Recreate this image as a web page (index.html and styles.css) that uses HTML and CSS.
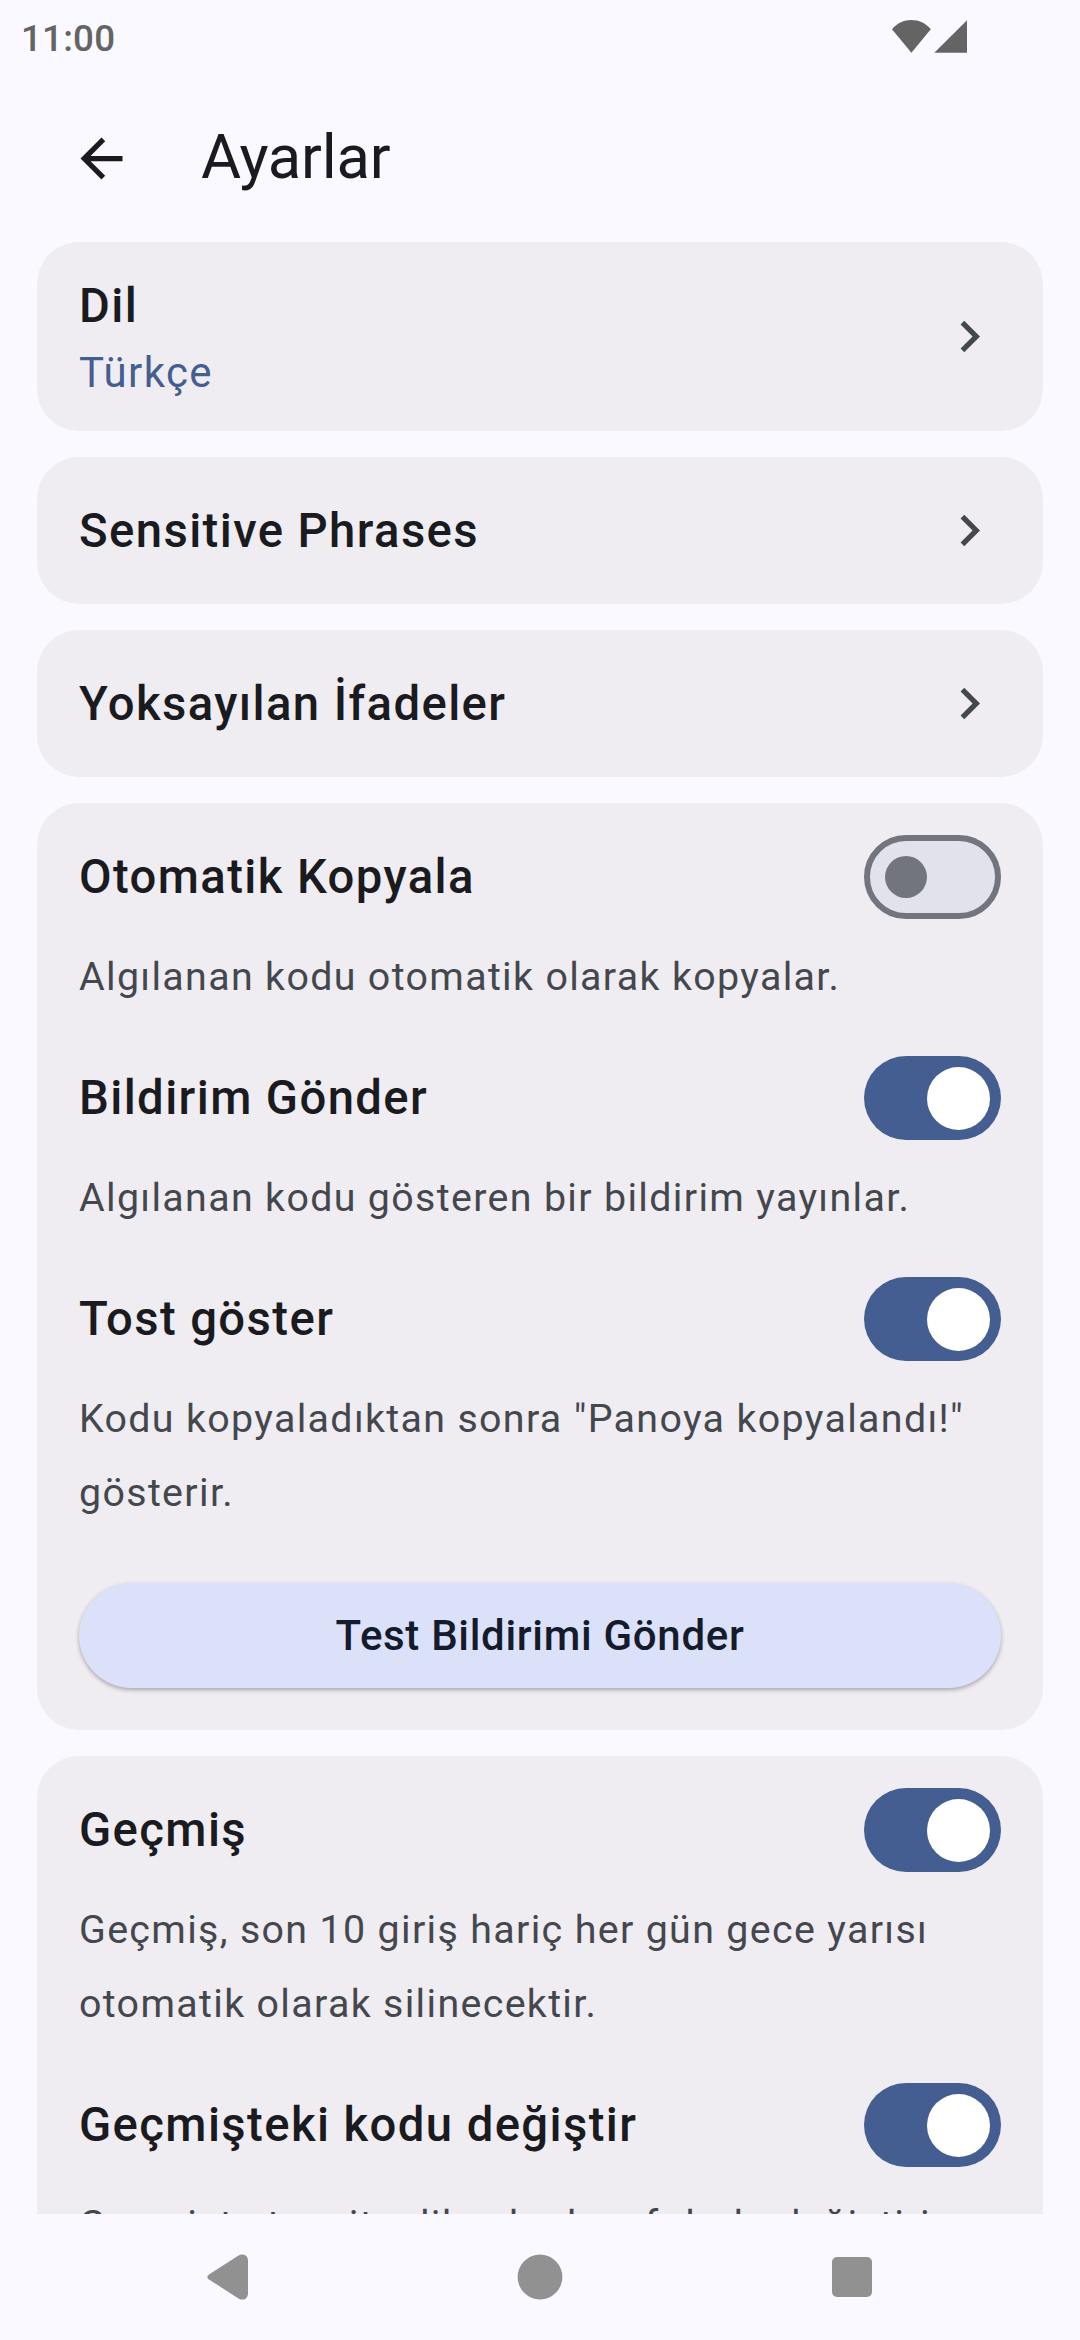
FILE: index.html
```html
<!DOCTYPE html>
<html lang="tr">
<head>
<meta charset="utf-8">
<title>Ayarlar</title>
<link rel="stylesheet" href="styles.css">
</head>
<body>
<div class="screen">
  <div class="status-bar">
    <span class="clock">11:00</span>
    <svg class="status-icons" width="75" height="33" viewBox="0 0 75 33" fill="currentColor">
      <path d="M0 9.2C5.2 3 12 0 19.4 0s14.2 3 19.4 9.2L19.4 32.7z"/>
      <path d="M42.3 32.7H75V0.3z"/>
    </svg>
  </div>

  <header class="app-bar">
    <svg class="back" viewBox="0 0 24 24" fill="currentColor"><path d="M20 11H7.83l5.59-5.59L12 4l-8 8 8 8 1.41-1.41L7.83 13H20z"/></svg>
    <h1 class="app-title">Ayarlar</h1>
  </header>

  <main class="content">
    <section class="card nav-card tall">
      <div class="labels">
        <h2 class="title">Dil</h2>
        <p class="value">Türkçe</p>
      </div>
      <svg class="chevron" viewBox="0 0 24 24" fill="currentColor"><path d="M10 6L8.59 7.41 13.17 12l-4.58 4.59L10 18l6-6z"/></svg>
    </section>

    <section class="card nav-card">
      <h2 class="title">Sensitive Phrases</h2>
      <svg class="chevron" viewBox="0 0 24 24" fill="currentColor"><path d="M10 6L8.59 7.41 13.17 12l-4.58 4.59L10 18l6-6z"/></svg>
    </section>

    <section class="card nav-card">
      <h2 class="title">Yoksayılan İfadeler</h2>
      <svg class="chevron" viewBox="0 0 24 24" fill="currentColor"><path d="M10 6L8.59 7.41 13.17 12l-4.58 4.59L10 18l6-6z"/></svg>
    </section>

    <section class="card">
      <div class="setting">
        <h2 class="title">Otomatik Kopyala</h2>
        <span class="switch"><span class="knob"></span></span>
      </div>
      <p class="description">Algılanan kodu otomatik olarak kopyalar.</p>

      <div class="setting">
        <h2 class="title">Bildirim Gönder</h2>
        <span class="switch on"><span class="knob"></span></span>
      </div>
      <p class="description">Algılanan kodu gösteren bir bildirim yayınlar.</p>

      <div class="setting">
        <h2 class="title">Tost göster</h2>
        <span class="switch on"><span class="knob"></span></span>
      </div>
      <p class="description">Kodu kopyaladıktan sonra "Panoya kopyalandı!" gösterir.</p>

      <button class="test-button">Test Bildirimi Gönder</button>
    </section>

    <section class="card">
      <div class="setting">
        <h2 class="title">Geçmiş</h2>
        <span class="switch on"><span class="knob"></span></span>
      </div>
      <p class="description">Geçmiş, son 10 giriş hariç her gün gece yarısı otomatik olarak silinecektir.</p>

      <div class="setting">
        <h2 class="title">Geçmişteki kodu değiştir</h2>
        <span class="switch on"><span class="knob"></span></span>
      </div>
      <p class="description">Geçmişte tespit edilen kodu sıfırlarla değiştirir.</p>
    </section>
  </main>

  <nav class="nav-bar">
    <svg width="42" height="46" viewBox="0 0 42 46" fill="currentColor"><path d="M2.4 20.2L31.5 1.6C36 -1.2 41 1.2 41 6.5V39.5C41 44.8 36 47.2 31.5 44.4L2.4 25.8C-0.3 24.1 -0.3 21.9 2.4 20.2z"/></svg>
    <svg width="46" height="46" viewBox="0 0 46 46" fill="currentColor"><circle cx="23" cy="23" r="22.4"/></svg>
    <svg width="42" height="42" viewBox="0 0 42 42" fill="currentColor"><rect x="1" y="1" width="40" height="40" rx="5"/></svg>
  </nav>
</div>
</body>
</html>
```
FILE: styles.css
```css
* {
  box-sizing: border-box;
  margin: 0;
  padding: 0;
}

body {
  background: #faf9ff;
  color: #1a1b20;
  font-family: Roboto, sans-serif;
}

.screen {
  display: flex;
  flex-direction: column;
  width: 1080px;
  height: 2340px;
  overflow: hidden;
}

.status-bar {
  display: flex;
  justify-content: space-between;
  align-items: flex-start;
  height: 74px;
  padding: 20px 113px 0 21px;
  color: #646464;
}

.clock {
  font-size: 36.75px;
  font-weight: 500;
  line-height: 38px;
  letter-spacing: 0.2px;
}

.app-bar {
  display: flex;
  align-items: center;
  gap: 68px;
  height: 168px;
  padding-left: 70px;
}

.back {
  width: 63px;
  height: 63px;
}

.app-title {
  padding-bottom: 2px;
  font-size: 61.5px;
  font-weight: 400;
  line-height: 74px;
  letter-spacing: -0.2px;
}

.content {
  display: flex;
  flex-direction: column;
  gap: 26px;
  height: 1972px;
  padding: 0 37px;
  overflow: hidden;
}

.card {
  flex: none;
  padding: 0 42px;
  border-radius: 42px;
  background: #efedf1;
}

.nav-card {
  display: flex;
  justify-content: space-between;
  align-items: center;
  height: 147px;
}

.nav-card.tall {
  height: 189px;
}

.labels {
  display: flex;
  flex-direction: column;
  gap: 3px;
  padding-top: 5px;
}

.title {
  font-size: 47.25px;
  font-weight: 500;
  line-height: 63px;
  letter-spacing: 1.4px;
}

.nav-card > .title {
  padding-top: 1px;
}

.value {
  color: #455e91;
  font-size: 42px;
  line-height: 63px;
  letter-spacing: 1.4px;
}

.chevron {
  width: 63px;
  height: 63px;
  color: #44474e;
}

.setting {
  display: flex;
  justify-content: space-between;
  align-items: center;
  height: 136px;
  padding: 32px 0 20px;
}

.description {
  padding: 1px 0 10px;
  color: #44474e;
  font-size: 39.375px;
  line-height: 74px;
  letter-spacing: 1.34px;
}

.switch {
  display: flex;
  align-items: center;
  width: 137px;
  height: 84px;
  padding-left: 15px;
  border: 6px solid #72757e;
  border-radius: 42px;
  background: #e1e2ec;
}

.knob {
  width: 42px;
  height: 42px;
  border-radius: 50%;
  background: #72757e;
}

.switch.on {
  justify-content: flex-end;
  padding: 0 11px 0 0;
  border: 0;
  background: #455e91;
}

.switch.on .knob {
  width: 63px;
  height: 63px;
  background: #fff;
}

.test-button {
  display: block;
  width: 100%;
  height: 105px;
  margin: 43px 0 42px;
  border: 0;
  border-radius: 53px;
  background: #dce1fa;
  box-shadow: 0 2px 4px rgba(0, 0, 0, 0.3);
  color: #141b2c;
  font: 500 42px/105px Roboto, sans-serif;
  letter-spacing: 0.68px;
}

.nav-bar {
  display: flex;
  justify-content: space-between;
  align-items: center;
  height: 126px;
  padding: 0 207px;
  color: #919191;
}
```
